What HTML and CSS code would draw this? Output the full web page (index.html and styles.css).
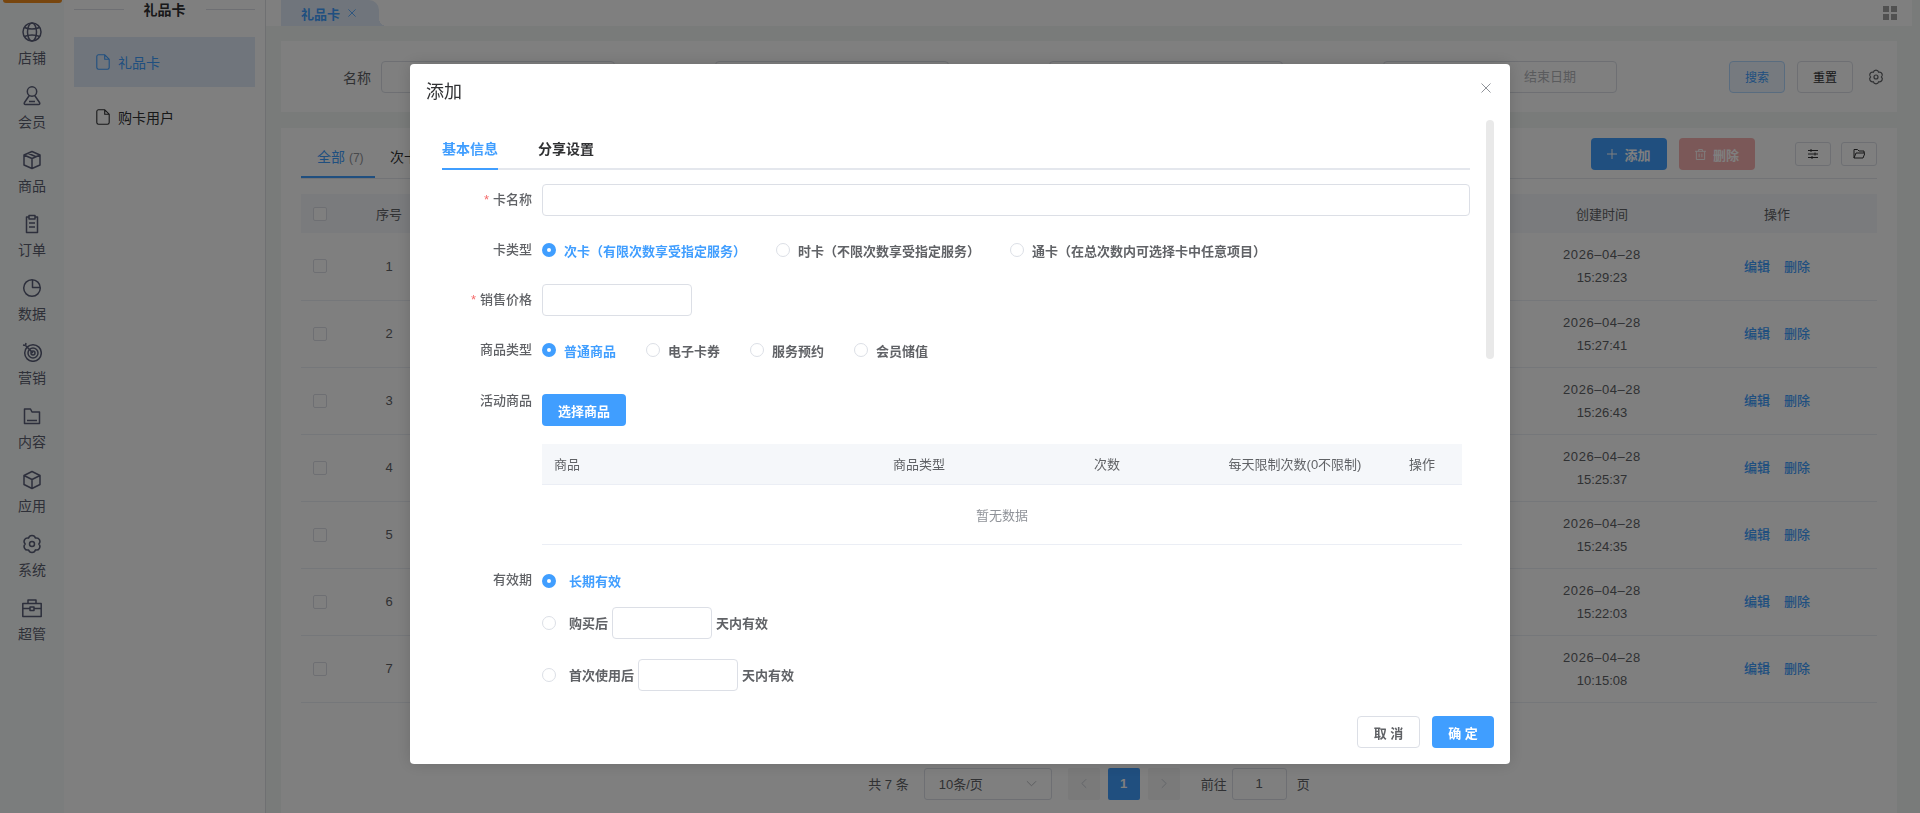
FILE: index.html
```html
<!DOCTYPE html>
<html lang="zh-CN">
<head>
  <meta charset="UTF-8">
  <title>礼品卡</title>
  <link rel="stylesheet" href="styles.css">
</head>
<body>

  <svg class="sprite" width="0" height="0">
    <symbol id="i-file" viewBox="0 0 14 16"><path d="M2.5 .8h6.2l4.5 4.4v8.3a1.7 1.7 0 0 1-1.7 1.7H2.5a1.7 1.7 0 0 1-1.7-1.7V2.500a1.7 1.7 0 0 1 1.700-1.700zM8.700 .8v4.400h4.500" fill="none" stroke="currentColor" stroke-width="1.100"/></symbol>
    <symbol id="i-gear" viewBox="0 0 20 20"><path d="M16.800 10A3.500 3.500 0 0 1 13.400 15.890A3.500 3.500 0 0 1 6.600 15.890A3.500 3.500 0 0 1 3.200 10A3.500 3.500 0 0 1 6.600 4.110A3.500 3.500 0 0 1 13.400 4.110A3.500 3.500 0 0 1 16.800 10z" fill="none" stroke="currentColor" stroke-width="1.500"/><circle cx="10" cy="10" r="2.500" fill="none" stroke="currentColor" stroke-width="1.500"/></symbol>
    <symbol id="i-close" viewBox="0 0 10 10"><path d="M.5 .5l9 9M9.500 .5l-9 9" fill="none" stroke="currentColor" stroke-width="1"/></symbol>
  </svg>

  <div class="page">
    <!-- Left icon rail -->
    <nav class="rail">
      <div class="rail-badge"></div>
      <a class="rail-item">
        <svg class="rail-icon" viewBox="0 0 20 20"><circle cx="10" cy="10" r="9"/><ellipse cx="10" cy="10" rx="4.500" ry="9"/><path d="M2.500 5.500c4 2 11 2 15 0M2.500 14.500c4-2 11-2 15 0"/></svg>
        <span>店铺</span>
      </a>
      <a class="rail-item">
        <svg class="rail-icon" viewBox="0 0 20 20"><circle cx="10" cy="5.500" r="4.700"/><path d="M7.300 9.500L2.500 16.500a1.200 1.200 0 0 0 1 2h13a1.200 1.200 0 0 0 1-2L12.700 9.500M7 15.500h6"/></svg>
        <span>会员</span>
      </a>
      <a class="rail-item">
        <svg class="rail-icon" viewBox="0 0 20 20"><path d="M10 1.500l8 3.500v10l-8 3.500-8-3.500V5zM2 5l8 3.500L18 5M10 8.500v10M6 3.200l8 3.600"/></svg>
        <span>商品</span>
      </a>
      <a class="rail-item">
        <svg class="rail-icon" viewBox="0 0 20 20"><path d="M7 3H4.500v15.500h11V3H13M7 1.500h6v3.500H7zM7 9h6M7 13h6"/></svg>
        <span>订单</span>
      </a>
      <a class="rail-item">
        <svg class="rail-icon" viewBox="0 0 20 20"><circle cx="10" cy="10" r="8.300"/><path d="M10.500 2v7.500H18"/></svg>
        <span>数据</span>
      </a>
      <a class="rail-item">
        <svg class="rail-icon" viewBox="0 0 20 20"><circle cx="11" cy="11" r="8.300"/><circle cx="11" cy="11" r="5"/><circle cx="11" cy="11" r="2"/><path d="M11 11L3.500 3.500M3.500 3.500L1 3M3.500 3.500L4 1"/></svg>
        <span>营销</span>
      </a>
      <a class="rail-item">
        <svg class="rail-icon" viewBox="0 0 20 20"><path d="M2.500 3h6l1.500 3h7.500v11.500h-15zM5 14.500h10"/></svg>
        <span>内容</span>
      </a>
      <a class="rail-item">
        <svg class="rail-icon" viewBox="0 0 20 20"><path d="M10 1.500l8 4v9l-8 4-8-4v-9zM2 5.500l8 4 8-4M10 9.500v9"/></svg>
        <span>应用</span>
      </a>
      <a class="rail-item">
        <svg class="rail-icon rail-icon-gear"><use href="#i-gear"/></svg>
        <span>系统</span>
      </a>
      <a class="rail-item">
        <svg class="rail-icon" viewBox="0 0 20 20"><path d="M.8 5.500h18.400v13H.8zM6 5.500V2h8v3.500M.8 10.500h7M12.200 10.500h7M8 9h4v3.500H8z"/></svg>
        <span>超管</span>
      </a>
    </nav>

    <!-- Second level menu -->
    <aside class="side">
      <div class="side-title"><span>礼品卡</span></div>
      <a class="side-item active"><svg class="file-icon"><use href="#i-file"/></svg>礼品卡</a>
      <a class="side-item"><svg class="file-icon"><use href="#i-file"/></svg>购卡用户</a>
    </aside>

    <main class="main">
      <div class="tabbar">
        <div class="tabbar-tab">礼品卡<svg class="tabbar-close"><use href="#i-close"/></svg></div>
        <div class="tabbar-grid"><i></i><i></i><i></i><i></i></div>
      </div>

      <section class="search">
        <label class="search-label">名称</label>
        <div class="field"></div>
        <div class="field field-gap"></div>
        <div class="field field-gap"></div>
        <div class="field field-gap field-range">结束日期</div>
        <button class="btn btn-search">搜索</button>
        <button class="btn btn-reset">重置</button>
        <svg class="search-gear"><use href="#i-gear"/></svg>
      </section>

      <section class="list">
        <div class="toolbar">
          <div class="list-tab active">全部 <small>(7)</small></div>
          <div class="list-tab">次卡</div>
          <div class="toolbar-actions">
            <button class="btn btn-add"><svg viewBox="0 0 10 10"><path d="M5 0v10M0 5h10"/></svg>添加</button>
            <button class="btn btn-del"><svg viewBox="0 0 12 12"><path d="M0 2.500h12M4 2.500V.5h4v2M1.500 2.500v9h9v-9M4.500 5v4M7.500 5v4"/></svg>删除</button>
            <button class="btn-icon first"><svg viewBox="0 0 12 12"><path d="M1 2.500h10M1 6h10M1 9.500h10M4 1v3M8 4.500v3M5 8v3"/></svg></button>
            <button class="btn-icon"><svg viewBox="0 0 12 12"><path d="M1 10V1.500h3.500L6 3h5v2M1 10l2-5h9l-2 5z"/></svg></button>
          </div>
        </div>

        <table class="grid">
          <colgroup><col class="c-check"><col class="c-no"><col><col class="c-time"><col class="c-op"></colgroup>
          <thead>
            <tr><th><span class="check"></span></th><th>序号</th><th></th><th>创建时间</th><th>操作</th></tr>
          </thead>
          <tbody>
            <tr><td><span class="check"></span></td><td>1</td><td></td><td><div class="date">2026–04–28</div><div>15:29:23</div></td><td><a class="op">编辑</a><a class="op">删除</a></td></tr>
            <tr><td><span class="check"></span></td><td>2</td><td></td><td><div class="date">2026–04–28</div><div>15:27:41</div></td><td><a class="op">编辑</a><a class="op">删除</a></td></tr>
            <tr><td><span class="check"></span></td><td>3</td><td></td><td><div class="date">2026–04–28</div><div>15:26:43</div></td><td><a class="op">编辑</a><a class="op">删除</a></td></tr>
            <tr><td><span class="check"></span></td><td>4</td><td></td><td><div class="date">2026–04–28</div><div>15:25:37</div></td><td><a class="op">编辑</a><a class="op">删除</a></td></tr>
            <tr><td><span class="check"></span></td><td>5</td><td></td><td><div class="date">2026–04–28</div><div>15:24:35</div></td><td><a class="op">编辑</a><a class="op">删除</a></td></tr>
            <tr><td><span class="check"></span></td><td>6</td><td></td><td><div class="date">2026–04–28</div><div>15:22:03</div></td><td><a class="op">编辑</a><a class="op">删除</a></td></tr>
            <tr><td><span class="check"></span></td><td>7</td><td></td><td><div class="date">2026–04–28</div><div>10:15:08</div></td><td><a class="op">编辑</a><a class="op">删除</a></td></tr>
          </tbody>
        </table>

        <div class="pager">
          <span>共 7 条</span>
          <div class="pager-select">10条/页<svg viewBox="0 0 12 7"><path d="M1 1l5 5 5-5"/></svg></div>
          <div class="pager-btn prev"><svg viewBox="0 0 7 12"><path d="M6 1L1 6l5 5"/></svg></div>
          <div class="pager-btn current">1</div>
          <div class="pager-btn"><svg viewBox="0 0 7 12"><path d="M1 1l5 5-5 5"/></svg></div>
          <span class="pager-goto">前往</span>
          <div class="pager-input">1</div>
          <span>页</span>
        </div>
      </section>
    </main>
  </div>

  <!-- Add dialog -->
  <div class="mask">
    <div class="dialog">
      <div class="dialog-head">
        <h2>添加</h2>
        <svg class="dialog-close"><use href="#i-close"/></svg>
      </div>

      <div class="dialog-body">
        <div class="form-tabs">
          <div class="form-tab active">基本信息</div>
          <div class="form-tab">分享设置</div>
        </div>

        <div class="form-row">
          <label class="form-label"><em>*</em>卡名称</label>
          <div class="input input-full"></div>
        </div>

        <div class="form-row">
          <label class="form-label">卡类型</label>
          <div class="radios">
            <span class="radio checked"><i></i>次卡（有限次数享受指定服务）</span>
            <span class="radio"><i></i>时卡（不限次数享受指定服务）</span>
            <span class="radio"><i></i>通卡（在总次数内可选择卡中任意项目）</span>
          </div>
        </div>

        <div class="form-row">
          <label class="form-label"><em>*</em>销售价格</label>
          <div class="input input-price"></div>
        </div>

        <div class="form-row row-goods-type">
          <label class="form-label">商品类型</label>
          <div class="radios">
            <span class="radio checked"><i></i>普通商品</span>
            <span class="radio"><i></i>电子卡券</span>
            <span class="radio"><i></i>服务预约</span>
            <span class="radio"><i></i>会员储值</span>
          </div>
        </div>

        <div class="form-row">
          <label class="form-label label-top">活动商品</label>
          <button class="btn-primary">选择商品</button>
        </div>

        <table class="goods">
          <colgroup><col class="g-name"><col class="g-type"><col class="g-count"><col class="g-limit"><col class="g-op"></colgroup>
          <thead>
            <tr><th class="left">商品</th><th>商品类型</th><th>次数</th><th>每天限制次数(0不限制)</th><th>操作</th></tr>
          </thead>
          <tbody>
            <tr><td colspan="5">暂无数据</td></tr>
          </tbody>
        </table>

        <div class="form-row valid">
          <label class="form-label label-valid">有效期</label>
          <div class="valid-list">
            <div class="valid-line first"><span class="radio checked wide"><i></i>长期有效</span></div>
            <div class="valid-line second"><span class="radio wide"><i></i>购买后</span><div class="input input-days"></div><span>天内有效</span></div>
            <div class="valid-line"><span class="radio wide"><i></i>首次使用后</span><div class="input input-days"></div><span>天内有效</span></div>
          </div>
        </div>
      </div>

      <div class="scrollbar"></div>

      <div class="dialog-foot">
        <button class="btn-cancel">取 消</button>
        <button class="btn-primary btn-ok">确 定</button>
      </div>
    </div>
  </div>

</body>
</html>
```

FILE: styles.css
```css
* {
  box-sizing: border-box;
}

html, body {
  height: 100%;
}

body {
  margin: 0;
  overflow: hidden;
  font-family: "Liberation Sans", "Noto Sans CJK SC", sans-serif;
  font-size: 13px;
  color: #606266;
  background-color: #f3f6f5;
}

button {
  font-family: inherit;
  padding: 0;
}

.sprite {
  position: absolute;
}

.page {
  display: flex;
  height: 100vh;
}

/* Icon rail */
.rail {
  width: 64px;
  flex-shrink: 0;
  background-color: #f7fafa;
}

.rail-badge {
  height: 3px;
  margin: 0 2px 9px 3px;
  background-color: #f08c1e;
  border-radius: 0 0 8px 8px;
}

.rail-item {
  display: flex;
  flex-direction: column;
  align-items: center;
  height: 64px;
  padding-top: 10px;
  font-size: 14px;
  line-height: 20px;
  color: #5c6070;
}

.rail-item span {
  margin-top: 6px;
}

.rail-icon {
  width: 20px;
  height: 20px;
  fill: none;
  stroke: #5a5f78;
  stroke-width: 1.5;
  stroke-linejoin: round;
}

.rail-icon-gear {
  color: #5a5f78;
  stroke: none;
}

/* Second level menu */
.side {
  width: 202px;
  flex-shrink: 0;
  padding: 0 10px;
  background-color: #fff;
  border-right: 1px solid #dfe1e4;
}

.side-title {
  display: flex;
  align-items: center;
  gap: 20px;
  height: 18px;
  margin-bottom: 19px;
  font-size: 14px;
  font-weight: 700;
  color: #303133;
}

.side-title span {
  flex-shrink: 0;
}

.side-title::before,
.side-title::after {
  content: "";
  flex: 1;
  height: 1px;
  background-color: #dcdfe6;
}

.side-item {
  display: flex;
  align-items: center;
  gap: 8px;
  height: 50px;
  margin-bottom: 5px;
  padding-left: 22px;
  font-size: 14px;
  color: #303133;
}

.side-item.active {
  color: #409eff;
  background-color: #e0ebf8;
}

.file-icon {
  width: 14px;
  height: 16px;
}

/* Main area */
.main {
  flex: 1;
  min-width: 0;
  display: flex;
  flex-direction: column;
  padding: 0 23px 0 15px;
}

.tabbar {
  display: flex;
  justify-content: space-between;
  align-items: center;
  height: 26px;
  margin: 0 -15px 15px -15px;
  padding: 0 15px;
  background-color: #fff;
}

.tabbar-tab {
  position: relative;
  display: flex;
  align-items: center;
  gap: 8px;
  width: 98px;
  height: 26px;
  padding-left: 20px;
  font-weight: 700;
  color: #409eff;
  background-color: #e0ebf8;
  border-radius: 0 10px 0 0;
}

.tabbar-tab::after {
  content: "";
  position: absolute;
  right: -8px;
  bottom: 0;
  width: 8px;
  height: 8px;
  background: radial-gradient(circle at 100% 0, transparent 8px, #e0ebf8 8px);
}

.tabbar-close {
  width: 8px;
  height: 8px;
}

.tabbar-grid {
  display: grid;
  grid-template-columns: 6px 6px;
  gap: 2px;
  margin-right: 0;
}

.tabbar-grid i {
  height: 6px;
  background-color: #a3a3a3;
}

.search {
  display: flex;
  align-items: center;
  height: 71px;
  padding-left: 62px;
  margin-bottom: 16px;
  background-color: #fff;
}

.search-label {
  width: 28px;
  margin-right: 10px;
  font-size: 14px;
}

.field {
  width: 234px;
  height: 32px;
  border: 1px solid #dcdfe6;
  border-radius: 4px;
}

.field-gap {
  margin-left: 100px;
}

.field-range {
  padding-right: 40px;
  line-height: 30px;
  text-align: right;
  color: #b4b6bb;
}

.btn {
  height: 32px;
  border-radius: 4px;
  border: 1px solid #dcdfe6;
  background-color: #fff;
}

.btn-search {
  width: 56px;
  margin-left: 112px;
  font-size: 12px;
  color: #409eff;
  background-color: #ecf5ff;
  border-color: #b3d8ff;
}

.btn-reset {
  width: 56px;
  margin-left: 12px;
  font-size: 12px;
  color: #303133;
}

.search-gear {
  width: 16px;
  height: 16px;
  margin-left: 15px;
  color: #606266;
}

.list {
  flex: 1;
  padding: 0 20px;
  background-color: #fff;
}

.toolbar {
  display: flex;
  height: 51px;
  border-bottom: 1px solid #e4e7ed;
  margin-bottom: 15px;
}

.list-tab {
  padding: 0 15px;
  height: 50px;
  font-size: 14px;
  line-height: 58px;
  color: #303133;
}

.list-tab small {
  font-size: 12px;
  color: #909399;
}

.list-tab.active {
  width: 74px;
  padding: 0 0 0 16px;
  color: #409eff;
  border-bottom: 2px solid #409eff;
}

.toolbar-actions {
  display: flex;
  align-items: flex-start;
  margin-left: auto;
  padding-top: 10px;
}

.btn-add,
.btn-del {
  display: flex;
  align-items: center;
  justify-content: center;
  gap: 7px;
  width: 76px;
  font-size: 13px;
  font-weight: 700;
  color: #fff;
  border: 0;
}

.btn-add {
  background-color: #409eff;
}

.btn-add svg,
.btn-del svg {
  width: 10px;
  height: 10px;
  fill: none;
  stroke: #fff;
  stroke-width: 1;
}

.btn-del svg {
  width: 11px;
  height: 11px;
}

.btn-del {
  margin-left: 12px;
  background-color: #f7b0b0;
}

.btn-icon {
  width: 36px;
  height: 24px;
  margin-top: 4px;
  margin-left: 10px;
  background-color: #fff;
  border: 1px solid #dcdfe6;
  border-radius: 3px;
}

.btn-icon.first {
  margin-left: 40px;
}

.btn-icon svg {
  display: block;
  width: 12px;
  height: 12px;
  margin: auto;
  fill: none;
  stroke: #303133;
  stroke-width: 1;
}

.grid {
  width: 100%;
  table-layout: fixed;
  border-collapse: collapse;
  text-align: center;
}

.c-check { width: 48px; }
.c-no { width: 80px; }
.c-time { width: 150px; }
.c-op { width: 200px; }

.grid th {
  height: 39px;
  padding: 0;
  font-weight: 400;
  background-color: #f5f7fa;
}

.grid td {
  height: 67px;
  padding: 0;
  line-height: 23px;
  border-bottom: 1px solid #ebeef5;
}

.date {
  letter-spacing: .55px;
}

.check {
  display: block;
  width: 14px;
  height: 14px;
  margin-left: 12px;
  background-color: #fff;
  border: 1px solid #dcdfe6;
  border-radius: 2px;
}

.op {
  margin: 0 7px;
  font-weight: 500;
  color: #409eff;
}

.pager {
  display: flex;
  align-items: center;
  justify-content: center;
  height: 32px;
  margin-top: 65px;
  color: #606266;
}

.pager-select {
  display: flex;
  align-items: center;
  justify-content: space-between;
  width: 128px;
  height: 32px;
  margin: 0 16px 0 15px;
  padding: 0 14px;
  border: 1px solid #dcdfe6;
  border-radius: 3px;
}

.pager-select svg {
  width: 11px;
  height: 7px;
  fill: none;
  stroke: #b4b6bb;
}

.pager-btn {
  display: flex;
  align-items: center;
  justify-content: center;
  width: 32px;
  height: 32px;
  margin-right: 8px;
  background-color: #f4f4f5;
  border-radius: 2px;
}

.pager-btn svg {
  width: 6px;
  height: 11px;
  fill: none;
  stroke: #c0c4cc;
}

.pager-btn.current {
  font-weight: 700;
  color: #fff;
  background-color: #409eff;
}

.pager-goto {
  margin-left: 13px;
}

.pager-input {
  width: 55px;
  height: 32px;
  margin: 0 10px 0 5px;
  line-height: 30px;
  text-align: center;
  border: 1px solid #dcdfe6;
  border-radius: 3px;
}

/* Dialog */
.mask {
  position: fixed;
  top: 0;
  left: 0;
  width: 100%;
  height: 100%;
  display: flex;
  justify-content: center;
  padding-top: 64px;
  background-color: rgba(0, 0, 0, .5);
}

.dialog {
  position: relative;
  display: flex;
  flex-direction: column;
  width: 1100px;
  height: 700px;
  background-color: #fff;
  border-radius: 4px;
  box-shadow: 0 0 16px rgba(0, 0, 0, .15);
}

.dialog-head {
  display: flex;
  justify-content: space-between;
  height: 56px;
  padding: 0 19px 0 16px;
}

.dialog-head h2 {
  margin: 0;
  font-size: 18px;
  font-weight: 400;
  line-height: 56px;
  color: #303133;
}

.dialog-close {
  width: 10px;
  height: 10px;
  margin-top: 19px;
  color: #909399;
}

.dialog-body {
  flex: 1;
  overflow: hidden;
  padding: 0 40px 0 32px;
}

.scrollbar {
  position: absolute;
  top: 56px;
  right: 16px;
  width: 8px;
  height: 239px;
  background-color: #e9e9e9;
  border-radius: 4px;
}

.form-tabs {
  display: flex;
  gap: 40px;
  height: 50px;
  margin-bottom: 14px;
  border-bottom: 2px solid #e4e7ed;
}

.form-tab {
  height: 50px;
  font-size: 14px;
  font-weight: 700;
  line-height: 58px;
  color: #303133;
}

.form-tab.active {
  color: #409eff;
  border-bottom: 2px solid #409eff;
}

.form-row {
  display: flex;
  margin-bottom: 18px;
  min-height: 32px;
}

.row-goods-type {
  margin-bottom: 28px;
}

.form-label {
  flex-shrink: 0;
  width: 100px;
  padding-right: 10px;
  line-height: 32px;
  text-align: right;
  font-family: "Liberation Sans", "Noto Sans CJK SC Medium", "Noto Sans CJK SC", sans-serif;
}

.form-label em {
  margin-right: 4px;
  font-style: normal;
  color: #f56c6c;
}

.label-top {
  line-height: 14px;
}

.label-valid {
  line-height: 34px;
}

.input {
  height: 32px;
  border: 1px solid #dcdfe6;
  border-radius: 4px;
}

.input-full {
  flex: 1;
}

.input-price {
  width: 150px;
}

.input-days {
  width: 100px;
  margin: 0 4px;
}

.radios {
  display: flex;
  align-items: center;
  gap: 30px;
}

.radio {
  display: inline-flex;
  align-items: center;
  gap: 8px;
  font-weight: 700;
}

.radio.wide {
  gap: 13px;
}

.radio i {
  width: 14px;
  height: 14px;
  border: 1px solid #dcdfe6;
  border-radius: 50%;
  background-color: #fff;
}

.radio.checked {
  color: #409eff;
}

.radio.checked i {
  border: 5px solid #409eff;
}

.btn-primary {
  width: 84px;
  height: 32px;
  font-size: 13px;
  font-weight: 700;
  color: #fff;
  background-color: #409eff;
  border: 0;
  border-radius: 4px;
}

.goods {
  width: 920px;
  margin: 0 0 18px 100px;
  table-layout: fixed;
  border-collapse: collapse;
  text-align: center;
}

.g-name { width: 290px; }
.g-type { width: 174px; }
.g-count { width: 202px; }
.g-limit { width: 174px; }
.g-op { width: 80px; }

.goods th {
  height: 40px;
  padding: 0;
  font-weight: 400;
  background-color: #f5f7fa;
  border-bottom: 1px solid #ebeef5;
}

.goods th.left {
  padding-left: 12px;
  text-align: left;
}

.goods td {
  height: 60px;
  padding: 0;
  color: #909399;
  border-bottom: 1px solid #ebeef5;
}

.valid-line {
  display: flex;
  align-items: center;
  height: 32px;
  font-weight: 700;
}

.valid-line.first {
  height: 36px;
  margin-bottom: 8px;
}

.valid-line.second {
  margin-bottom: 20px;
}

.dialog-foot {
  display: flex;
  justify-content: flex-end;
  gap: 12px;
  padding: 16px;
}

.btn-cancel {
  width: 63px;
  height: 32px;
  font-size: 13px;
  font-weight: 700;
  color: #606266;
  background-color: #fff;
  border: 1px solid #dcdfe6;
  border-radius: 4px;
}

.btn-ok {
  width: 62px;
}
```
